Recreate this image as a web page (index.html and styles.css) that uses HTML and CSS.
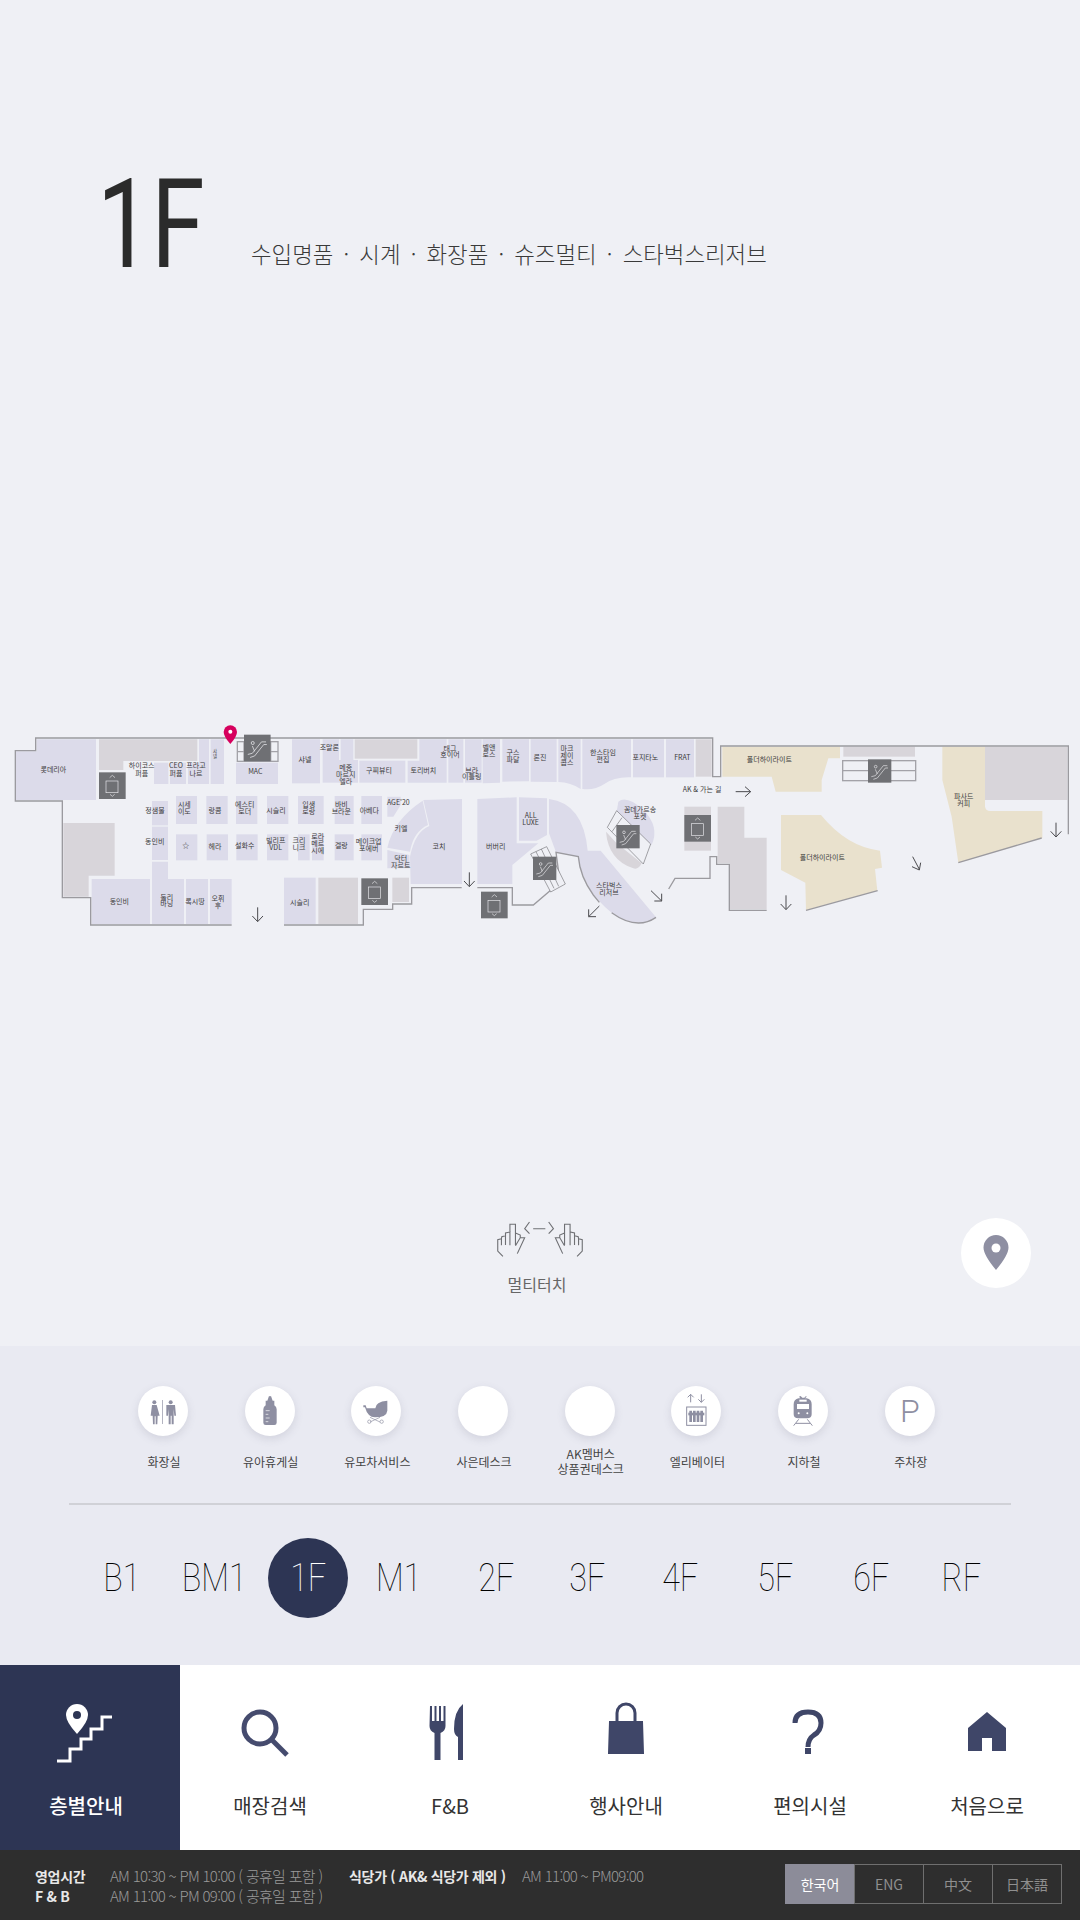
FILE: index.html
```html
<!DOCTYPE html>
<html lang="ko">
<head>
    <meta charset="UTF-8">
    <meta name="viewport" content="width=device-width, initial-scale=1.0">
    <title>층별안내 1F</title>
    <link rel="stylesheet" href="styles.css">
</head>
<body>
<div class="kiosk">
    <section class="floor-view">
        <div class="floor-head">
            <h1 class="floor-code"><span>1F</span></h1>
            <p class="floor-desc">수입명품 · 시계 · 화장품 · 슈즈멀티 · 스타벅스리저브</p>
        </div>

        <!-- floor map, coordinates are 3x page pixels -->
        <svg class="floor-map" viewBox="0 0 3240 780">
            <defs>
                <g id="lift">
                    <rect width="80" height="80" fill="#6f7074"/>
                    <rect x="21" y="26" width="36" height="35" fill="none" stroke="#e8e8ec" stroke-width="2"/>
                    <path d="M32 16l8-7 8 7M33 66l7 6 7-6" fill="none" stroke="#e8e8ec" stroke-width="2"/>
                </g>
                <g id="esc">
                    <rect width="70" height="70" fill="#6f7074"/>
                    <circle cx="23" cy="22" r="4" fill="none" stroke="#e8e8ec" stroke-width="2"/>
                    <path d="M10 52l12-3 24-30h12M16 60l12-4 24-30h8M22 30l6 14" fill="none" stroke="#e8e8ec" stroke-width="2"/>
                </g>
                <path id="arrow" d="M0 0v42M-16 26l16 17 16-17" fill="none" stroke="#4a4a4e" stroke-width="3"/>
            </defs>

            <g class="grey">
                <path d="M297 118h295v65H370v27h-73z"/>
                <path d="M190 369h154v158h-78v63h-76z"/>
                <rect x="955" y="533" width="119" height="139"/>
                <rect x="1064" y="118" width="188" height="58"/>
                <rect x="1177" y="533" width="50" height="73"/>
                <rect x="2087" y="118" width="48" height="112"/>
                <path d="M1818 395Q1825 480 1900 505Q1915 510 1925 490L1850 430Z"/>
                <rect x="2053" y="320" width="80" height="132"/>
                <path d="M2153 320h80v93h67v215h-110V490h-37z"/>
                <rect x="2530" y="140" width="215" height="30"/>
                <path d="M2955 140h247v160h-247z"/>
            </g>

            <g class="tan">
                <path d="M2167 140h353v35h-35l-20 65v35h-138l-12-45h-148z"/>
                <path d="M2343 345h120Q2540 440 2640 452l6 51-21 4 7 65-214 58-2-82-73-38z"/>
                <path d="M2827 140h128v180Q2958 333 2970 333h157v81l-252 74-20-138-28-110z"/>
            </g>

            <g class="store">
                <path d="M110 118h178v182H48V154h62z"/>
                <rect x="462" y="188" width="43" height="64"/>
                <rect x="510" y="188" width="48" height="64"/>
                <path d="M597 118h30v134h-63v-64h33z"/>
                <rect x="632" y="118" width="40" height="134"/>
                <rect x="708" y="188" width="126" height="64"/>
                <rect x="876" y="118" width="84" height="132"/>
                <rect x="968" y="118" width="49" height="130"/>
                <path d="M1022 118h38v62h14v68h-57v-68h5z"/>
                <rect x="1078" y="182" width="138" height="66"/>
                <path d="M1258 118h82v130h-117v-66h35z"/>
                <rect x="1345" y="118" width="45" height="130"/>
                <rect x="1395" y="118" width="50" height="130"/>
                <path d="M1448 118h52v130l-52 2z"/>
                <path d="M1507 118h80v126l-80 1z"/>
                <path d="M1592 118h78v128l-78-1z"/>
                <path d="M1675 118h67v149q-30-20-67-21z"/>
                <path d="M1747 118h146v114q-50-2-80 20-30 20-66 15z"/>
                <rect x="1899" y="118" width="93" height="114"/>
                <rect x="1998" y="118" width="84" height="114"/>

                <rect x="456" y="303" width="48" height="73"/>
                <rect x="456" y="380" width="48" height="100"/>
                <rect x="528" y="288" width="63" height="84"/>
                <rect x="619" y="288" width="64" height="84"/>
                <rect x="708" y="288" width="64" height="84"/>
                <rect x="801" y="288" width="64" height="84"/>
                <rect x="894" y="288" width="77" height="84"/>
                <rect x="1004" y="288" width="57" height="84"/>
                <rect x="1084" y="288" width="62" height="84"/>
                <path d="M1162 290h40v25l-22 35h-18z"/>

                <rect x="528" y="403" width="64" height="78"/>
                <rect x="620" y="403" width="64" height="78"/>
                <rect x="709" y="403" width="64" height="78"/>
                <rect x="801" y="403" width="64" height="78"/>
                <rect x="894" y="403" width="35" height="78"/>
                <rect x="936" y="403" width="35" height="78"/>
                <rect x="1004" y="403" width="57" height="78"/>
                <rect x="1084" y="403" width="62" height="78"/>

                <rect x="275" y="537" width="175" height="135"/>
                <path d="M456 485h48v52h48v135h-96z"/>
                <rect x="558" y="537" width="66" height="135"/>
                <rect x="630" y="537" width="65" height="135"/>
                <rect x="852" y="533" width="95" height="139"/>

                <path d="M1268 302l16 73Q1240 395 1230 455l-68-12Q1180 360 1268 302z"/>
                <path d="M1162 450l66 15 2 40h-68z"/>
                <path d="M1270 300l116-3v255h-154l-2-82Q1245 395 1288 378z"/>
                <path d="M1432 297l118-5v138h65l-78 65v57h-105z"/>
                <path d="M1557 292l84 3v110l-31 17h-53z"/>
                <path d="M1647 297Q1750 310 1763 452h39l166 200Q1910 690 1835 638 1750 570 1735 470l-67-13-21-57z"/>
                <path d="M1855 305Q1880 285 1930 330 1980 380 1955 435L1850 335z"/>
            </g>

            <g class="walls">
                <path d="M695 675H272v-82h-85V303H46V152h61v-38h2031v116h24v-92h1043v265"/>
                <path d="M852 675h238v-47h88v-16h57v-49h150"/>
                <path d="M1432 563h105v52h63l80-68-12-90 67 13q5 60 45 115l18 22"/>
                <path d="M1835 638q75 54 133 14"/>
                <path d="M2006 567l19-32h105v-65h20v23h38v138h112"/>
                <path d="M2418 631l215-59"/>
                <path d="M2875 488l250-74"/>
            </g>

            <!-- escalator wells -->
            <g class="well well-heavy">
                <rect x="712" y="125" width="122" height="59"/>
                <path d="M712 155h122M732 125v59M812 125v59"/>
                <rect x="2528" y="182" width="219" height="60"/>
                <path d="M2528 212h219"/>
            </g>
            <g class="well">
                <path d="M1592 462l48-22 56 112-44 24zM1608 455l54 110M1624 447l52 112"/>
                <path d="M1822 382l28-50 102 100-22 60zM1836 395l30-42"/>
            </g>

            <use href="#lift" x="297" y="217"/>
            <use href="#lift" x="1084" y="535"/>
            <use href="#lift" x="1443" y="575"/>
            <use href="#lift" x="2053" y="345"/>
            <use href="#esc" transform="translate(732 104) scale(1.14)"/>
            <use href="#esc" x="1599" y="470"/>
            <use href="#esc" x="1849" y="375"/>
            <use href="#esc" x="2604" y="178"/>

            <use href="#arrow" x="773" y="622"/>
            <use href="#arrow" x="1408" y="517"/>
            <use href="#arrow" x="2358" y="586"/>
            <use href="#arrow" x="3168" y="368"/>
            <path class="arrow-line" d="M1798 618l-32 32M1766 628v22h22"/>
            <path class="arrow-line" d="M1953 572l32 31M1963 603h22v-22"/>
            <path class="arrow-line" d="M2207 275h45M2235 260l17 15-17 15"/>
            <path class="arrow-line" d="M2738 470l20 38M2736 500l22 10 4-22"/>

            <path d="M691 76a20 20 0 0 1 20 20q0 14-20 36-20-22-20-36a20 20 0 0 1 20-20z" fill="#d6005d"/>
            <circle cx="691" cy="95" r="6" fill="#fff"/>

            <g class="labels">
                <text x="160" y="215">롯데리아</text>
                <text x="425" y="205">하이코스</text><text x="425" y="227">퍼퓸</text>
                <text x="528" y="205">CEO</text><text x="528" y="227">퍼퓸</text>
                <text x="588" y="205">프라고</text><text x="588" y="227">나르</text>
                <text class="tiny" x="645" y="160">샤</text><text class="tiny" x="645" y="175">넬</text>
                <text x="766" y="221">MAC</text>
                <text x="915" y="187">샤넬</text>
                <text x="988" y="149">조말론</text>
                <text x="1037" y="209">메종</text><text x="1037" y="231">마르지</text><text x="1037" y="252">엘라</text>
                <text x="1137" y="218">구찌뷰티</text>
                <text x="1270" y="218">토리버치</text>
                <text x="1350" y="152">태그</text><text x="1350" y="172">호이어</text>
                <text x="1415" y="218">브라</text><text x="1415" y="238">이틀링</text>
                <text x="1467" y="150">벨앤</text><text x="1467" y="172">로스</text>
                <text x="1539" y="164">구스</text><text x="1539" y="185">파달</text>
                <text x="1620" y="179">론진</text>
                <text x="1701" y="152">마크</text><text x="1701" y="173">제이</text><text x="1701" y="194">콥스</text>
                <text x="1809" y="164">한스타임</text><text x="1809" y="185">편집</text>
                <text x="1936" y="179">포지타노</text>
                <text x="2047" y="179">FRAT</text>

                <text x="465" y="338">정샘물</text>
                <text x="553" y="322">시세</text><text x="553" y="343">이도</text>
                <text x="645" y="338">랑콤</text>
                <text x="734" y="322">에스티</text><text x="734" y="343">로더</text>
                <text x="828" y="338">시슬리</text>
                <text x="926" y="322">입생</text><text x="926" y="343">로랑</text>
                <text x="1024" y="322">바비</text><text x="1024" y="343">브라운</text>
                <text x="1108" y="338">아베다</text>
                <text x="1195" y="314">AGE'20</text>
                <text x="1203" y="392">키엘</text>

                <text x="464" y="431">동인비</text>
                <text x="557" y="444">☆</text>
                <text x="645" y="446">헤라</text>
                <text x="734" y="444">설화수</text>
                <text x="827" y="430">빌리프</text><text x="827" y="451">VDL</text>
                <text x="897" y="430">크리</text><text x="897" y="451">니크</text>
                <text x="953" y="418">로라</text><text x="953" y="439">메르</text><text x="953" y="460">시에</text>
                <text x="1024" y="443">겔랑</text>
                <text x="1106" y="431">메이크업</text><text x="1106" y="452">포에버</text>
                <text x="1202" y="482">닥터</text><text x="1202" y="503">자르트</text>

                <text x="358" y="611">동인비</text>
                <text x="500" y="599">둘리</text><text x="500" y="619">바닝</text>
                <text x="585" y="611">록시땅</text>
                <text x="654" y="602">오휘</text><text x="654" y="623">후</text>
                <text x="899" y="614">시슬리</text>
                <text x="1317" y="446">코치</text>
                <text x="1487" y="446">버버리</text>
                <text x="1592" y="355">ALL</text><text x="1592" y="376">LUXE</text>
                <text x="1920" y="336">꼼데가르송</text><text x="1920" y="357">포켓</text>
                <text x="1827" y="563">스타벅스</text><text x="1827" y="584">리저브</text>
                <text x="2106" y="277">AK &amp; 가는 길</text>
                <text x="2308" y="187">폴더하이라이트</text>
                <text x="2467" y="481">폴더하이라이트</text>
                <text x="2891" y="296">파사드</text><text x="2891" y="317">커피</text>
            </g>
        </svg>

        <div class="touch-guide">
            <svg class="touch-icon" viewBox="72 62 233 108" preserveAspectRatio="none">
                <g id="hand">
                    <path d="M88 168L74 152V118l10-3v20M84 115l1-6 10-3v28M95 106V98l12-3v40M107 95V72h15v62M122 98l13 6v8l-13 24M135 112h12l-20 48"/>
                </g>
                <use href="#hand" transform="matrix(-1 0 0 1 377 0)"/>
                <path d="M160 65l-13 20 13 15M212 65l13 20-13 15M170 85h33"/>
            </svg>
            <span>멀티터치</span>
        </div>

        <button class="locate" type="button">
            <svg viewBox="0 0 26 36" width="26" height="36">
                <path d="M13 0a12.500 12.500 0 0 1 12.500 12.500Q25.500 20 13 35 .5 20 .5 12.500A12.500 12.500 0 0 1 13 0z" fill="#8e8fa2"/>
                <circle cx="13" cy="13" r="4.500" fill="#fff"/>
            </svg>
        </button>
    </section>

    <section class="facilities">
        <ul class="facility-list">
            <li>
                <span class="badge">
                    <svg viewBox="114 78 150 150">
                        <circle cx="163" cy="127" r="6"/><circle cx="212" cy="127" r="6"/>
                        <path d="M156 135h14l9 32h-6l-1 26h-5v-24h-3v24h-5l-1-26h-6z"/>
                        <path d="M199 135h26l3 32h-5l-2-20v46h-6v-26h-3v26h-6v-46l-2 20h-5z"/>
                        <rect x="186" y="120" width="2" height="72"/>
                    </svg>
                </span>
                <span class="facility-name">화장실</span>
            </li>
            <li>
                <span class="badge">
                    <svg viewBox="435 78 150 150">
                        <path d="M505 114q0-6 5-6t5 6l3 8h5v14q7 4 7 12v40q0 7-7 7h-26q-7 0-7-7v-40q0-8 7-12v-14h5z"/>
                        <path d="M497 152h12M497 163h8M497 174h12M497 185h8" stroke="#fff" stroke-width="2"/>
                    </svg>
                </span>
                <span class="facility-name">유아휴게실</span>
            </li>
            <li>
                <span class="badge">
                    <svg viewBox="753 78 150 150">
                        <path d="M826 145q0-20 36-23v30q-2 20-37 20-22 0-30-30h-5v-6h-3 10l3 9z"/>
                        <path d="M810 172l30 14M840 172l-30 14" stroke="#8e8fa2" stroke-width="2"/>
                        <circle cx="808" cy="185" r="5" fill="none" stroke="#8e8fa2" stroke-width="2"/>
                        <circle cx="845" cy="185" r="5" fill="none" stroke="#8e8fa2" stroke-width="2"/>
                    </svg>
                </span>
                <span class="facility-name">유모차서비스</span>
            </li>
            <li>
                <span class="badge"></span>
                <span class="facility-name">사은데스크</span>
            </li>
            <li>
                <span class="badge"></span>
                <span class="facility-name">AK멤버스<br>상품권데스크</span>
            </li>
            <li>
                <span class="badge">
                    <svg viewBox="426 78 150 150">
                        <path d="M485 127v-24M476 112l9-9 9 9M517 103v24M508 118l9 9 9-9" fill="none" stroke="#8e8fa2" stroke-width="3"/>
                        <rect x="473" y="141" width="58" height="55" fill="none" stroke="#8e8fa2" stroke-width="3"/>
                        <path d="M481 152h8v34h-8zM492 152h8v34h-8zM503 152h8v34h-8zM514 152h8v34h-8z"/>
                        <rect x="478" y="158" width="48" height="8"/>
                    </svg>
                </span>
                <span class="facility-name">엘리베이터</span>
            </li>
            <li>
                <span class="badge">
                    <svg viewBox="744 78 150 150">
                        <path d="M812 108l5 5h6l5-5 2 2-5 5h5q15 3 15 18v30q0 12-14 12h-26q-14 0-14-12v-30q0-15 15-18h5l-4-5z"/>
                        <rect x="801" y="132" width="36" height="15" fill="#fff"/>
                        <rect x="808" y="119" width="22" height="6" fill="#fff"/>
                        <circle cx="806" cy="160" r="3" fill="#fff"/><circle cx="832" cy="160" r="3" fill="#fff"/>
                        <path d="M806 178l-15 19M832 178l15 19M798 190h42" stroke="#8e8fa2" stroke-width="3"/>
                    </svg>
                </span>
                <span class="facility-name">지하철</span>
            </li>
            <li>
                <span class="badge badge-text">P</span>
                <span class="facility-name">주차장</span>
            </li>
        </ul>

        <div class="floor-picker">
            <a><span>B1</span></a>
            <a><span>BM1</span></a>
            <a class="on"><span>1F</span></a>
            <a><span>M1</span></a>
            <a><span>2F</span></a>
            <a><span>3F</span></a>
            <a><span>4F</span></a>
            <a><span>5F</span></a>
            <a><span>6F</span></a>
            <a><span>RF</span></a>
        </div>
    </section>

    <nav class="main-nav">
        <a class="on">
            <svg viewBox="50 1700 70 66">
                <path d="M76 1704a11 11 0 0 1 11 11q0 7-11 19-11-12-11-19a11 11 0 0 1 11-11z" fill="#fff"/>
                <circle cx="76" cy="1715" r="4" fill="#2d3554"/>
                <path d="M56 1761h13v-12h11v-10h10v-10h11v-12h10" fill="none" stroke="#fff" stroke-width="3"/>
            </svg>
            <span>층별안내</span>
        </a>
        <a>
            <svg viewBox="235 1700 70 66">
                <circle cx="260" cy="1728" r="16" fill="none" stroke="#454b6e" stroke-width="5"/>
                <path d="M271 1739l16 16" stroke="#454b6e" stroke-width="5"/>
            </svg>
            <span>매장검색</span>
        </a>
        <a>
            <svg viewBox="415 1700 70 66">
                <path d="M430 1706h2v15h2.500v-15h2v15h2.500v-15h2v15h2.500v-15h2v20q0 5-5 7v27h-6v-27q-5-2-5-7z" fill="#3f4668"/>
                <path d="M463 1704v56h-5v-23q-4-2-4-8 0-18 9-25z" fill="#3f4668"/>
            </svg>
            <span>F&amp;B</span>
        </a>
        <a>
            <svg viewBox="592 1700 70 66">
                <path d="M618 1721v-8a9 9 0 0 1 18 0v8" fill="none" stroke="#3f4668" stroke-width="3"/>
                <path d="M610 1721h34l1 33h-36z" fill="#3f4668"/>
            </svg>
            <span>행사안내</span>
        </a>
        <a>
            <svg viewBox="776 1700 70 66">
                <path d="M796 1723q0-11 13-11t13 11q0 8-7 12-6 4-6 12" fill="none" stroke="#3f4668" stroke-width="5"/>
                <rect x="806" y="1748" width="6" height="6" fill="#3f4668"/>
            </svg>
            <span>편의시설</span>
        </a>
        <a>
            <svg viewBox="952 1700 70 66">
                <path d="M987 1712l19 16v23h-14v-13h-10v13h-14v-23z" fill="#3f4668"/>
            </svg>
            <span>처음으로</span>
        </a>
    </nav>

    <footer class="hours">
        <dl class="hours-table">
            <dt>영업시간</dt>
            <dd>AM 10:30 ~ PM 10:00 ( 공휴일 포함 )</dd>
            <dt>식당가 ( AK&amp; 식당가 제외 )</dt>
            <dd>AM 11:00 ~ PM09:00</dd>
            <dt>F &amp; B</dt>
            <dd>AM 11:00 ~ PM 09:00 ( 공휴일 포함 )</dd>
        </dl>
        <div class="lang">
            <a class="on">한국어</a>
            <a>ENG</a>
            <a>中文</a>
            <a>日本語</a>
        </div>
    </footer>
</div>
</body>
</html>
```

FILE: styles.css
```css
* {
    margin: 0;
    padding: 0;
    box-sizing: border-box;
}

body {
    font-family: "Noto Sans CJK KR", "Noto Sans", sans-serif;
    background-color: #eff0f5;
    color: #333;
}

a {
    display: block;
}

.kiosk {
    width: 1080px;
    height: 1920px;
    overflow: hidden;
    display: flex;
    flex-direction: column;
}

/* floor view */
.floor-view {
    position: relative;
    height: 1346px;
    padding-top: 177px;
}

.floor-head {
    display: flex;
    align-items: flex-end;
    height: 91px;
    padding-left: 97px;
}

.floor-code {
    width: 154px;
    height: 91px;
    font-family: Roboto, sans-serif;
    font-size: 124px;
    font-weight: 400;
    line-height: 95px;
    color: #2b2b2b;
}

.floor-code span {
    display: inline-block;
    transform: scaleX(.78);
    transform-origin: left center;
}

.floor-desc {
    font-size: 22.4px;
    font-weight: 300;
    word-spacing: 3.9px;
    line-height: 30px;
    color: #3a3a3a;
}

.floor-map {
    display: block;
    width: 1080px;
    height: 260px;
    margin-top: 432px;
}

.grey path, .grey rect {
    fill: #d8d5da;
}

.tan path {
    fill: #e9e1cd;
}

.store path, .store rect {
    fill: #dcdbea;
}

.walls path {
    fill: none;
    stroke: #9b9a9f;
    stroke-width: 4;
}

.well {
    fill: #eff0f5;
    stroke: #77777b;
    stroke-width: 2;
}

.well-heavy {
    stroke: #a3a2a8;
    stroke-width: 4;
}

.arrow-line {
    fill: none;
    stroke: #4a4a4e;
    stroke-width: 3;
}

.labels text {
    font-size: 21px;
    fill: #3c3c3c;
    text-anchor: middle;
}

.labels .tiny {
    font-size: 13px;
}

.touch-guide {
    width: 120px;
    margin: 261px 0 0 477px;
    display: flex;
    flex-direction: column;
    align-items: center;
    font-size: 16px;
    color: #666;
}

.touch-icon {
    width: 86px;
    height: 36px;
    margin: 0 0 15px 6px;
    fill: none;
    stroke: #6f7074;
    stroke-width: 3;
}

.locate {
    position: absolute;
    left: 961px;
    top: 1218px;
    width: 70px;
    height: 70px;
    border: none;
    border-radius: 50%;
    background: #fff;
    display: flex;
    align-items: center;
    justify-content: center;
}

/* facilities + floor picker */
.facilities {
    height: 319px;
    background-color: #e9eaf2;
    padding-top: 40px;
}

.facility-list {
    list-style: none;
    display: grid;
    grid-template-columns: repeat(8, 106.7px);
    height: 119px;
    margin: 0 69px;
    padding-left: 40.6px;
    border-bottom: 2px solid #d0d1d7;
}

.facility-list li {
    display: flex;
    flex-direction: column;
    align-items: center;
    font-size: 12px;
    color: #444;
}

.badge {
    width: 50px;
    height: 50px;
    border-radius: 50%;
    background: #fff;
    box-shadow: 0 3px 8px rgba(80, 80, 110, .15);
}

.badge svg {
    display: block;
    width: 50px;
    height: 50px;
    fill: #8e8fa2;
}

.badge-text {
    font-family: Roboto, sans-serif;
    font-size: 32px;
    font-weight: 300;
    line-height: 50px;
    text-align: center;
    color: #8e8fa2;
}

.facility-name {
    height: 50px;
    padding-left: 2px;
    display: flex;
    align-items: center;
    text-align: center;
    line-height: 15px;
}

.floor-picker {
    display: grid;
    grid-template-columns: 92px 92px 96px 86px 108px 74px 112px 78px 114px 66px;
    margin: 33px 0 0 76px;
}

.floor-picker a {
    height: 80px;
    display: flex;
    align-items: center;
    justify-content: center;
    font-family: Roboto, sans-serif;
    font-size: 38px;
    font-weight: 100;
    color: #000;
}

.floor-picker span {
    display: block;
    transform: scaleX(.85);
}

.floor-picker .on {
    width: 80px;
    justify-self: center;
    border-radius: 50%;
    background-color: #2d3554;
    color: #fff;
}

/* bottom nav */
.main-nav {
    height: 185px;
    background-color: #fff;
    display: grid;
    grid-template-columns: 180px 180px 180px 172px 196px 158px;
}

.main-nav a {
    display: flex;
    flex-direction: column;
    align-items: center;
    padding-top: 35px;
    font-size: 20px;
    color: #333;
}

.main-nav svg {
    width: 70px;
    height: 66px;
    margin-bottom: 25px;
}

.main-nav .on {
    background-color: #2d3554;
    color: #fff;
    font-weight: 500;
    padding-right: 8px;
}

/* footer */
.hours {
    height: 70px;
    background-color: #2e2e2e;
    display: flex;
    padding: 14px 18px 0 35px;
    justify-content: space-between;
}

.hours-table {
    display: grid;
    grid-template-columns: 75px 239px 173px auto;
    grid-auto-rows: 20px;
    font-size: 15px;
    font-weight: 300;
    letter-spacing: -.7px;
    line-height: 20px;
    white-space: nowrap;
    margin-top: 2px;
    color: #9a9a9a;
}

.hours-table dt {
    font-size: 14px;
    letter-spacing: -.3px;
    color: #e8e8e8;
    font-weight: bold;
}

.lang {
    display: flex;
    height: 40px;
}

.lang a {
    width: 70px;
    margin-left: -1px;
    border: 1px solid #6f6f6f;
    font-size: 14px;
    line-height: 38px;
    text-align: center;
    color: #8f8f8f;
}

.lang .on {
    background-color: #8c8c99;
    border-color: #8c8c99;
    color: #fff;
}
```
